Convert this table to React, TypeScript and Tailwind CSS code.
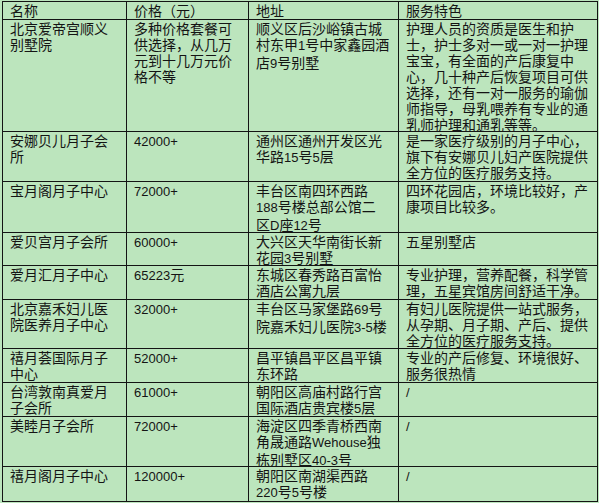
import React from "react";

type Row = {
  name: string[];
  price: string[];
  address: string[];
  service: string[];
};

const HEADERS = ["名称", "价格（元）", "地址", "服务特色"];

const ROWS: Row[] = [
  {
    name: ["北京爱帝宫顺义", "别墅院"],
    price: ["多种价格套餐可", "供选择，从几万", "元到十几万元价", "格不等"],
    address: ["顺义区后沙峪镇古城", "村东甲1号中家鑫园酒", "店9号别墅"],
    service: [
      "护理人员的资质是医生和护",
      "士，护士多对一或一对一护理",
      "宝宝，有全面的产后康复中",
      "心，几十种产后恢复项目可供",
      "选择，还有一对一服务的瑜伽",
      "师指导，母乳喂养有专业的通",
      "乳师护理和通乳等等。",
    ],
  },
  {
    name: ["安娜贝儿月子会", "所"],
    price: ["42000+"],
    address: ["通州区通州开发区光", "华路15号5层"],
    service: ["是一家医疗级别的月子中心，", "旗下有安娜贝儿妇产医院提供", "全方位的医疗服务支持。"],
  },
  {
    name: ["宝月阁月子中心"],
    price: ["72000+"],
    address: ["丰台区南四环西路", "188号楼总部公馆二", "区D座12号"],
    service: ["四环花园店，环境比较好，产", "康项目比较多。"],
  },
  {
    name: ["爱贝宫月子会所"],
    price: ["60000+"],
    address: ["大兴区天华南街长新", "花园3号别墅"],
    service: ["五星别墅店"],
  },
  {
    name: ["爱月汇月子中心"],
    price: ["65223元"],
    address: ["东城区春秀路百富怡", "酒店公寓九层"],
    service: ["专业护理，营养配餐，科学管", "理，五星宾馆房间舒适干净。"],
  },
  {
    name: ["北京嘉禾妇儿医", "院医养月子中心"],
    price: ["32000+"],
    address: ["丰台区马家堡路69号", "院嘉禾妇儿医院3-5楼"],
    service: ["有妇儿医院提供一站式服务，", "从孕期、月子期、产后、提供", "全方位的医疗服务支持。"],
  },
  {
    name: ["禧月荟国际月子", "中心"],
    price: ["52000+"],
    address: ["昌平镇昌平区昌平镇", "东环路"],
    service: ["专业的产后修复、环境很好、", "服务很热情"],
  },
  {
    name: ["台湾敦南真爱月", "子会所"],
    price: ["61000+"],
    address: ["朝阳区高庙村路行宫", "国际酒店贵宾楼5层"],
    service: ["/"],
  },
  {
    name: ["美睦月子会所"],
    price: ["72000+"],
    address: ["海淀区四季青桥西南", "角晟通路Wehouse独", "栋别墅区40-3号"],
    service: ["/"],
  },
  {
    name: ["禧月阁月子中心"],
    price: ["120000+"],
    address: ["朝阳区南湖渠西路", "220号5号楼"],
    service: ["/"],
  },
];

// latin runs (digits, +, -, letters) use a narrower face than the CJK text
function Mixed({ text }: { text: string }) {
  const parts = text.split(/([\x21-\x7e]+)/).filter(Boolean);
  return (
    <>
      {parts.map((p, i) =>
        /^[\x21-\x7e]+$/.test(p) ? (
          <span key={i} className="font-['Liberation_Sans',sans-serif] text-[13px]">
            {p}
          </span>
        ) : (
          <span key={i}>{p}</span>
        )
      )}
    </>
  );
}

function Cell({ lines }: { lines: string[] }) {
  return (
    <div className="border-l border-t border-[#141414] pl-[7px] pr-1">
      {lines.map((l, i) => (
        <div key={i} className="whitespace-nowrap">
          <Mixed text={l} />
        </div>
      ))}
    </div>
  );
}

export default function App() {
  return (
    <div className="h-[503px] w-[599px] overflow-hidden bg-[#bce5bd] pl-[2px] pt-px font-['Noto_Sans_CJK_SC',sans-serif] text-[14px] leading-[16px] text-[#141414]">
      <div className="grid w-[596px] grid-cols-[124px_122px_150px_199px] grid-rows-[18px_112px_50px_51px_33px_34px_49px_34px_34px_50px_35px] border-b border-r border-[#141414]">
        {HEADERS.map((h) => (
          <Cell key={h} lines={[h]} />
        ))}
        {ROWS.map((r, i) => (
          <React.Fragment key={i}>
            <Cell lines={r.name} />
            <Cell lines={r.price} />
            <Cell lines={r.address} />
            <Cell lines={r.service} />
          </React.Fragment>
        ))}
      </div>
    </div>
  );
}
